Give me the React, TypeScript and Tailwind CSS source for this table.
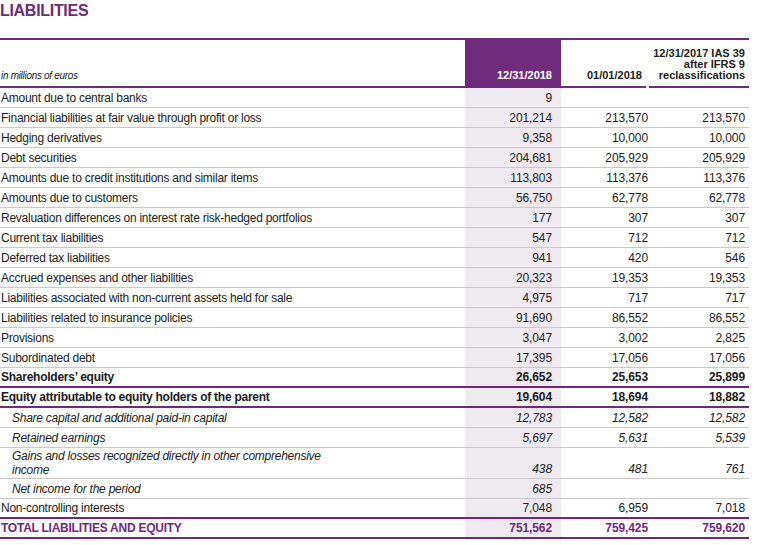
type Row = {
  label: string;
  v: [string, string, string];
  kind?: "bold" | "sub" | "total";
  line?: "purple";
  tall?: boolean;
};

const rows: Row[] = [
  { label: "Amount due to central banks", v: ["9", "", ""] },
  { label: "Financial liabilities at fair value through profit or loss", v: ["201,214", "213,570", "213,570"] },
  { label: "Hedging derivatives", v: ["9,358", "10,000", "10,000"] },
  { label: "Debt securities", v: ["204,681", "205,929", "205,929"] },
  { label: "Amounts due to credit institutions and similar items", v: ["113,803", "113,376", "113,376"] },
  { label: "Amounts due to customers", v: ["56,750", "62,778", "62,778"] },
  { label: "Revaluation differences on interest rate risk-hedged portfolios", v: ["177", "307", "307"] },
  { label: "Current tax liabilities", v: ["547", "712", "712"] },
  { label: "Deferred tax liabilities", v: ["941", "420", "546"] },
  { label: "Accrued expenses and other liabilities", v: ["20,323", "19,353", "19,353"] },
  { label: "Liabilities associated with non-current assets held for sale", v: ["4,975", "717", "717"] },
  { label: "Liabilities related to insurance policies", v: ["91,690", "86,552", "86,552"] },
  { label: "Provisions", v: ["3,047", "3,002", "2,825"] },
  { label: "Subordinated debt", v: ["17,395", "17,056", "17,056"] },
  { label: "Shareholders’ equity", v: ["26,652", "25,653", "25,899"], kind: "bold", line: "purple" },
  { label: "Equity attributable to equity holders of the parent", v: ["19,604", "18,694", "18,882"], kind: "bold", line: "purple" },
  { label: "Share capital and additional paid-in capital", v: ["12,783", "12,582", "12,582"], kind: "sub" },
  { label: "Retained earnings", v: ["5,697", "5,631", "5,539"], kind: "sub" },
  { label: "Gains and losses recognized directly in other comprehensive income", v: ["438", "481", "761"], kind: "sub", tall: true },
  { label: "Net income for the period", v: ["685", "", ""], kind: "sub" },
  { label: "Non-controlling interests", v: ["7,048", "6,959", "7,018"], line: "purple" },
  { label: "TOTAL LIABILITIES AND EQUITY", v: ["751,562", "759,425", "759,620"], kind: "total", line: "purple" },
];

const grid = "grid grid-cols-[465px_96px_91px_97px]";
const narrow = { fontFamily: '"Liberation Sans Narrow", "Liberation Sans", Arial, sans-serif' };

function TableRow({ r }: { r: Row }) {
  const border = r.line === "purple" ? "border-b-2 border-[#6e2a79]" : "border-b border-[#c9c9c9]";
  const height = r.tall ? "h-[31px]" : "h-[20px]";
  const text =
    r.kind === "bold"
      ? "font-bold text-[#1a1a1a]"
      : r.kind === "total"
        ? "font-bold text-[#6e2a79]"
        : r.kind === "sub"
          ? "italic text-[#222]"
          : "text-[#222]";
  return (
    <div className={`${grid} ${border} ${height} ${text} text-[12px] leading-[14px]`}>
      <div className={`flex ${r.tall ? "items-start pt-[1px]" : "items-center"} ${r.kind === "sub" ? "pl-[12px]" : "pl-px"}`}>
        <span className={`${r.kind === "sub" ? "max-w-[335px]" : ""} tracking-[-0.25px]`}>{r.label}</span>
      </div>
      <div className="flex items-end justify-end bg-[#efe9f0] pr-[9px] pb-[2px] tracking-[-0.1px]">{r.v[0]}</div>
      <div className="flex items-end justify-end pr-[4px] pb-[2px] tracking-[-0.1px]">{r.v[1]}</div>
      <div className="flex items-end justify-end pr-[4px] pb-[2px] tracking-[-0.1px]">{r.v[2]}</div>
    </div>
  );
}

export default function App() {
  return (
    <div className="w-[765px] h-[545px] bg-white overflow-hidden" style={{ fontFamily: '"Liberation Sans", Arial, sans-serif' }}>
      <h1 className="pt-[2px] h-[38px] text-[16px] leading-[18px] font-bold text-[#6e2a79] tracking-[-0.3px]">LIABILITIES</h1>
      <div className="w-[749px]">
        <div className={`${grid} h-[50px] border-t-2 border-[#6e2a79]`}>
          <div className="flex items-end border-b-2 border-[#6e2a79] pb-[5px] pl-px">
            <span className="italic text-[10px] leading-[11px] text-[#222] tracking-[-0.3px]">in millions of euros</span>
          </div>
          <div className="flex items-end justify-end bg-[#702b7c] border-b-2 border-[#6e2a79] pr-[9px] pb-[5px]">
            <span className="text-white font-bold text-[11px] leading-[12px]" style={narrow}>12/31/2018</span>
          </div>
          <div className="flex items-end justify-end border-b-2 border-[#6e2a79] pr-[4px] pb-[5px] mr-[6px]">
            <span className="text-[#222] font-bold text-[11px] leading-[12px]" style={narrow}>01/01/2018</span>
          </div>
          <div className="flex items-end justify-end border-b-2 border-[#6e2a79] pr-[4px] pb-[5px] -ml-[3px]">
            <span className="text-right text-[#222] font-bold text-[11px] leading-[11px]" style={narrow}>
              12/31/2017 IAS 39
              <br />
              after IFRS 9
              <br />
              reclassifications
            </span>
          </div>
        </div>
        {rows.map((r) => (
          <TableRow key={r.label} r={r} />
        ))}
      </div>
    </div>
  );
}
